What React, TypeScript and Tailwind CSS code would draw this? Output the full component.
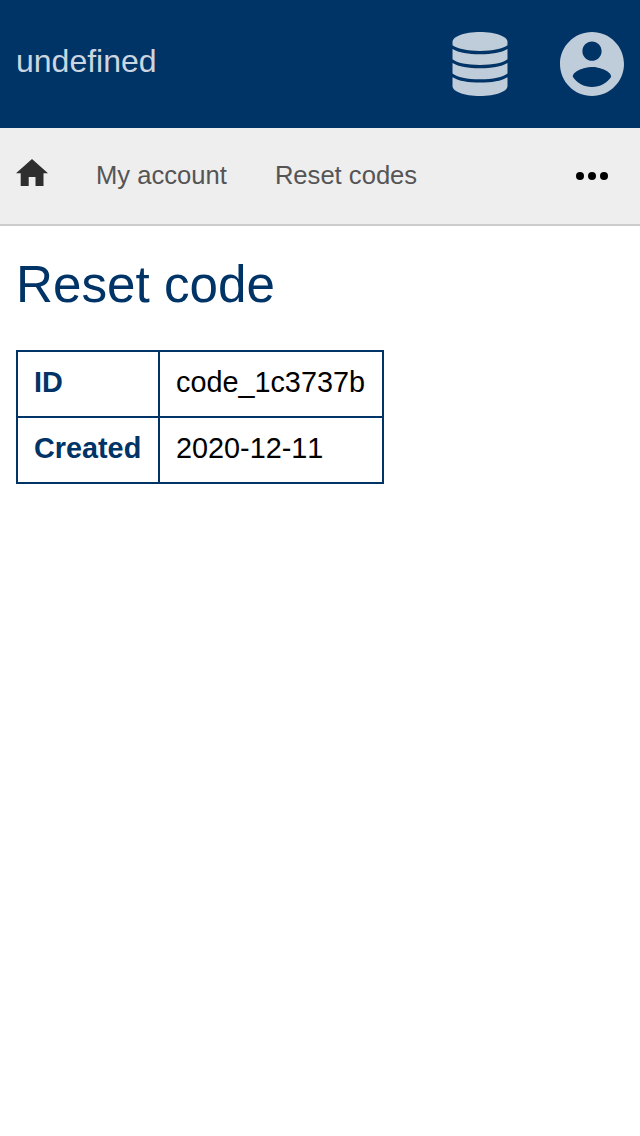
import React from "react";

const rows = [
  { label: "ID", value: "code_1c3737b" },
  { label: "Created", value: "2020-12-11" },
];

function DatabaseIcon() {
  return (
    <svg className="size-16" viewBox="0 0 64 64" fill="#bfccd9">
      <path d="M4.500 10C4.500 4.500 16 0 32 0s27.500 4.500 27.500 10v3.300C55 16.800 45 18.900 32 18.900S9 16.800 4.500 13.300z" />
      <path d="M4.500 16.900C11 20.600 20 22.200 32 22.200s21-1.600 27.500-5.300v10.400C55 30.900 45 33 32 33S9 30.900 4.500 27.300z" />
      <path d="M4.500 31C11 34.700 20 36.300 32 36.300s21-1.600 27.500-5.300v10.500C55 45.200 45 47.300 32 47.300S9 45.200 4.500 41.500z" />
      <path d="M4.500 45.200C11 49 20 50.600 32 50.600S53 49 59.500 45.200V54C59.500 59.500 48 64 32 64S4.500 59.500 4.500 54z" />
    </svg>
  );
}

function AccountIcon() {
  return (
    <svg className="size-16" viewBox="2 2 20 20" fill="#bfccd9">
      <path d="M12 2C6.480 2 2 6.480 2 12s4.480 10 10 10 10-4.480 10-10S17.520 2 12 2zm0 3c1.660 0 3 1.340 3 3s-1.340 3-3 3-3-1.340-3-3 1.340-3 3-3zm0 14.200c-2.500 0-4.710-1.280-6-3.220.03-1.990 4-3.080 6-3.080 1.990 0 5.970 1.090 6 3.080-1.290 1.940-3.500 3.220-6 3.220z" />
    </svg>
  );
}

export default function App() {
  return (
    <div className="min-h-screen bg-white font-['Liberation_Sans',sans-serif] text-black">
      <header className="flex h-32 items-center justify-between bg-[#003366] px-4">
        <span className="pb-1.5 text-[32px] leading-10 text-[#ccd6e0]">undefined</span>
        <div className="flex gap-12">
          <DatabaseIcon />
          <AccountIcon />
        </div>
      </header>
      <nav className="flex h-[98px] items-center border-b-2 border-[#cccccc] bg-[#eeeeee] px-4 text-[25.600px] text-[#555555]">
        <svg className="mb-[7px] h-[27.200px] w-8" viewBox="0 0 32 27.200" fill="#2e2e2e">
          <path d="M16 0 0 14.300h4.700v13h8V17.900h6.800v9.400h8v-13H32z" />
        </svg>
        <span className="ml-12 pb-0.5">My account</span>
        <span className="ml-12 pb-0.5">Reset codes</span>
        <svg className="mr-4 ml-auto h-2 w-8" viewBox="0 0 32 8" fill="#000000">
          <circle cx="4" cy="4" r="4" />
          <circle cx="16" cy="4" r="4" />
          <circle cx="28" cy="4" r="4" />
        </svg>
      </nav>
      <main className="px-4 pt-[29px]">
        <h1 className="text-[51.200px] leading-[60px] text-[#003366]">Reset code</h1>
        <table className="mt-[35px] w-[368px] table-fixed border-collapse text-[28.800px] leading-8 [font-kerning:none]">
          <tbody>
            {rows.map((row) => (
              <tr key={row.label}>
                <th className="w-[142px] border-2 border-[#003366] px-4 pt-3.5 pb-[18px] text-left font-bold text-[#003366]">{row.label}</th>
                <td className="border-2 border-[#003366] px-4 pt-3.5 pb-[18px]">{row.value}</td>
              </tr>
            ))}
          </tbody>
        </table>
      </main>
    </div>
  );
}
